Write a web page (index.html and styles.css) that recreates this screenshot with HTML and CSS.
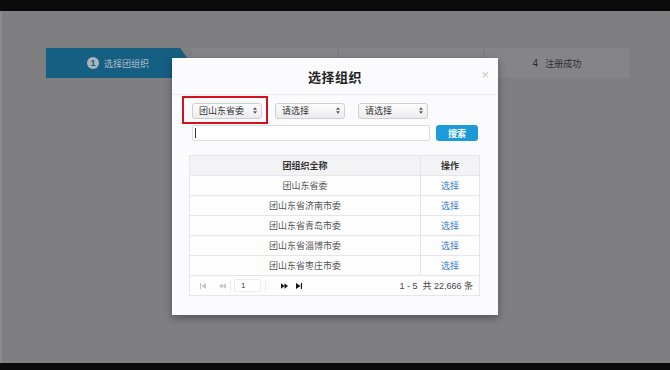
FILE: index.html
```html
<!DOCTYPE html>
<html>
<head>
  <meta charset="utf-8">
  <title>选择组织</title>
  <link rel="stylesheet" href="styles.css">
</head>
<body>
  <div class="topbar"></div>
  <div class="stage">
    <div class="steps">
      <div class="step active"><span class="num">1</span>选择团组织</div>
      <div class="step">填写信息</div>
      <div class="step">提交审核</div>
      <div class="step"><span class="plain">4</span>注册成功</div>
    </div>

    <div class="modal">
      <div class="modal-head">
        <h2>选择组织</h2>
        <span class="close">×</span>
      </div>
      <div class="modal-body">
        <div class="selects">
          <div class="select">团山东省委<svg viewBox="0 0 6 10" width="4" height="7"><path d="M3 0 6 4H0zM3 10 0 6h6z" fill="#555"/></svg></div>
          <div class="select">请选择<svg viewBox="0 0 6 10" width="4" height="7"><path d="M3 0 6 4H0zM3 10 0 6h6z" fill="#555"/></svg></div>
          <div class="select">请选择<svg viewBox="0 0 6 10" width="4" height="7"><path d="M3 0 6 4H0zM3 10 0 6h6z" fill="#555"/></svg></div>
          <div class="mark"></div>
        </div>
        <div class="search">
          <div class="input"><span class="caret"></span></div>
          <button>搜索</button>
        </div>

        <table class="grid">
          <thead>
            <tr><th>团组织全称</th><th class="op">操作</th></tr>
          </thead>
          <tbody>
            <tr><td>团山东省委</td><td class="op"><a>选择</a></td></tr>
            <tr><td>团山东省济南市委</td><td class="op"><a>选择</a></td></tr>
            <tr><td>团山东省青岛市委</td><td class="op"><a>选择</a></td></tr>
            <tr><td>团山东省淄博市委</td><td class="op"><a>选择</a></td></tr>
            <tr><td>团山东省枣庄市委</td><td class="op"><a>选择</a></td></tr>
          </tbody>
          <tfoot>
            <tr>
              <td colspan="2">
                <div class="pager">
                  <svg class="off" viewBox="0 0 8 8" width="6" height="6"><path d="M0 0h1.5v8H0zM8 0v8L2 4z"/></svg>
                  <svg class="off prev" viewBox="0 0 10 8" width="7" height="6"><path d="M5 0v8L0 4zM10 0v8L5 4z"/></svg>
                  <span class="sep"></span>
                  <span class="page">1</span>
                  <span class="sep"></span>
                  <svg class="next" viewBox="0 0 10 8" width="7" height="6"><path d="M0 0v8l5-4zM5 0v8l5-4z"/></svg>
                  <svg class="last" viewBox="0 0 8 8" width="6" height="6"><path d="M0 0v8l6-4zM6.5 0H8v8H6.5z"/></svg>
                  <span class="info">1 - 5 &nbsp;共 22,666 条</span>
                </div>
              </td>
            </tr>
          </tfoot>
        </table>
      </div>
    </div>
  </div>
  <div class="bottombar"></div>
</body>
</html>
```

FILE: styles.css
```css
body {
    margin: 0;
    background-color: #0b0b0b;
    font-family: 'Liberation Sans', 'Noto Sans CJK SC', sans-serif;
    color: #444;
}
.topbar {
    height: 11px;
}
.bottombar {
    height: 7px;
}
.stage {
    position: relative;
    height: 352px;
    background-color: #7f7e80;
    border-left: 2px solid #8c8b8d;
    box-sizing: border-box;
    padding: 37px 41px 0 44px;
}
.steps {
    display: grid;
    grid-template-columns: repeat(4, 1fr);
    gap: 2px;
}
.step {
    height: 30px;
    background-color: #858486;
    display: flex;
    align-items: center;
    justify-content: center;
    font-size: 9px;
    color: #2e2e30;
}
.step.active {
    background-color: #155f82;
    color: #aebcc6;
    clip-path: polygon(0 0, calc(100% - 10px) 0, 100% 50%, calc(100% - 10px) 100%, 0 100%);
}
.num {
    width: 12px;
    height: 12px;
    border-radius: 50%;
    background-color: #aab5bd;
    color: #155f82;
    font-weight: bold;
    font-size: 9px;
    display: inline-flex;
    align-items: center;
    justify-content: center;
    margin-right: 5px;
}
.plain {
    font-size: 10px;
    margin-right: 7px;
}

/* 弹窗 */
.modal {
    position: absolute;
    left: 170px;
    top: 47px;
    width: 326px;
    height: 257px;
    background-color: #fbfbfd;
    box-shadow: 0 3px 8px rgba(0, 0, 0, 0.35);
}
.modal-head {
    position: relative;
    height: 36px;
    border-bottom: 1px solid #ececee;
    display: flex;
    align-items: center;
    justify-content: center;
}
.modal-head h2 {
    margin: 0;
    font-size: 13px;
    font-weight: bold;
    color: #222;
    letter-spacing: 0.5px;
}
.close {
    position: absolute;
    right: 9px;
    top: 9px;
    font-size: 13px;
    color: #c6c6c8;
}
.modal-body {
    padding: 4px 18px 0 17px;
}
.selects {
    position: relative;
    display: flex;
    gap: 13px;
    padding: 0 0 0 3px;
    height: 23px;
    align-items: center;
}
.select {
    width: 70px;
    height: 16px;
    box-sizing: border-box;
    border: 1px solid #cfcfd2;
    border-radius: 3px;
    background: linear-gradient(#fdfdfd, #ececee);
    font-size: 9px;
    color: #333;
    display: flex;
    align-items: center;
    justify-content: space-between;
    padding: 0 4px 0 6px;
}
.mark {
    position: absolute;
    left: -7px;
    top: -3px;
    width: 86px;
    height: 28px;
    box-sizing: border-box;
    border: 2px solid #d4111c;
}
.search {
    display: flex;
    gap: 6px;
    align-items: center;
    padding-left: 3px;
    margin-top: 3px;
}
.input {
    width: 238px;
    height: 16px;
    box-sizing: border-box;
    border: 1px solid #dcdcdf;
    border-radius: 2px;
    background-color: #fff;
    display: flex;
    align-items: center;
    padding-left: 2px;
}
.caret {
    width: 1px;
    height: 10px;
    background-color: #333;
}
button {
    width: 42px;
    height: 16px;
    border: none;
    border-radius: 3px;
    background-color: #1c9bd8;
    color: #fff;
    font-family: inherit;
    font-size: 9px;
    font-weight: bold;
    padding: 0;
}
.grid {
    margin-top: 14px;
    width: 291px;
    border-collapse: collapse;
    font-size: 9px;
    color: #555;
}
.grid th, .grid td {
    height: 19px;
    padding: 0;
    text-align: center;
    border: 1px solid #e6e6e8;
}
.grid th {
    background-color: #f3f3f5;
    color: #333;
    font-weight: bold;
}
.grid td {
    background-color: #fdfdfe;
}
.grid .op {
    width: 58px;
}
.grid a {
    color: #3b80c4;
}
.pager {
    display: flex;
    align-items: center;
    padding: 0 6px 0 10px;
    fill: #111;
}
.pager .off {
    fill: #c4c4c8;
}
.pager .prev {
    margin-left: 13px;
}
.pager .next {
    margin-left: 12px;
}
.pager .last {
    margin-left: 8px;
}
.sep {
    width: 1px;
    height: 12px;
    background-color: #ececee;
    margin: 0 3px 0 4px;
}
.page {
    width: 27px;
    height: 13px;
    border: 1px solid #ececee;
    border-radius: 2px;
    background-color: #fff;
    text-align: left;
    padding-left: 6px;
    box-sizing: border-box;
    font-size: 8px;
    line-height: 11px;
    color: #444;
}
.info {
    margin-left: auto;
    color: #444;
}
```
